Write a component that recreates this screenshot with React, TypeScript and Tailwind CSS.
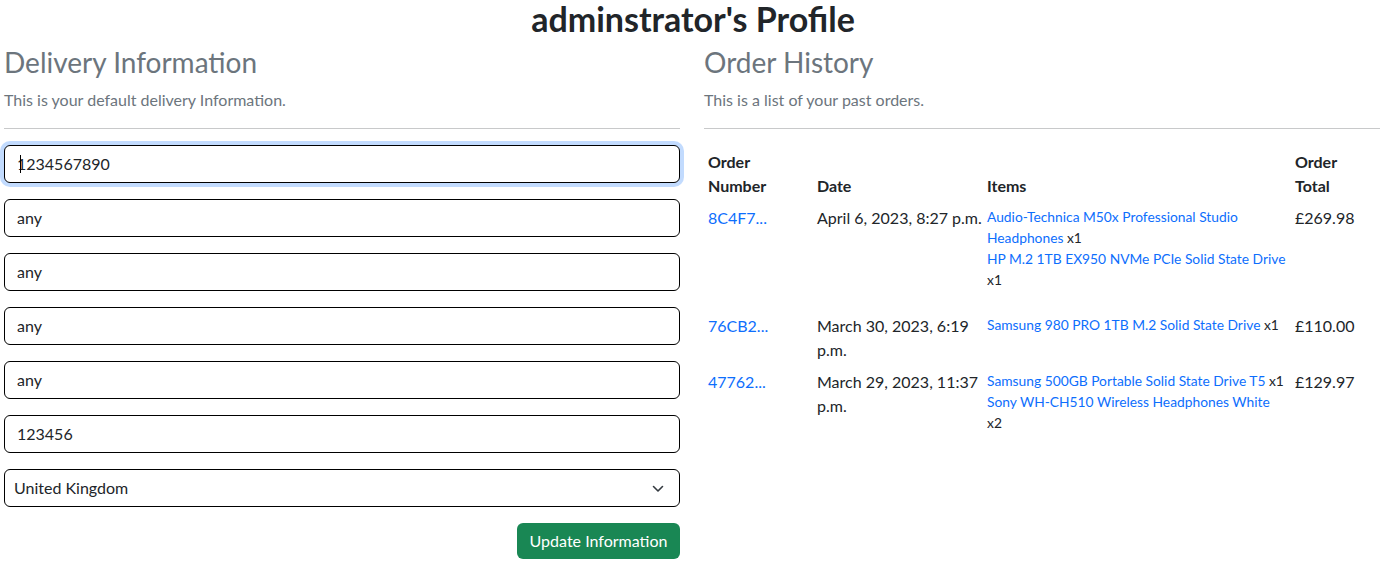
const font = { fontFamily: 'Lato, "Open Sans", sans-serif' };

// keep: hold the name and its quantity on one line; nowrap: don't break the name itself
type Item = { name: string; qty: number; nowrap?: boolean; keep?: boolean };
type Order = { number: string; date: string; items: Item[]; total: string };

const ORDERS: Order[] = [
  {
    number: '8C4F7...',
    date: 'April 6, 2023, 8:27 p.m.',
    items: [
      { name: 'Audio-Technica M50x Professional Studio Headphones', qty: 1 },
      { name: 'HP M.2 1TB EX950 NVMe PCIe Solid State Drive', qty: 1, nowrap: true },
    ],
    total: '£269.98',
  },
  {
    number: '76CB2...',
    date: 'March 30, 2023, 6:19 p.m.',
    items: [{ name: 'Samsung 980 PRO 1TB M.2 Solid State Drive', qty: 1, keep: true }],
    total: '£110.00',
  },
  {
    number: '47762...',
    date: 'March 29, 2023, 11:37 p.m.',
    items: [
      { name: 'Samsung 500GB Portable Solid State Drive T5', qty: 1, keep: true },
      { name: 'Sony WH-CH510 Wireless Headphones White', qty: 2, nowrap: true },
    ],
    total: '£129.97',
  },
];

const FIELDS = ['1234567890', 'any', 'any', 'any', 'any', '123456'];

function Field({ value, focused }: { value: string; focused?: boolean }) {
  return (
    <div className="relative">
      <input
        defaultValue={value}
        readOnly
        className={`block h-[38px] w-full rounded-[6px] border border-black bg-white px-3 text-base text-[#212529] outline-none ${
          focused ? 'shadow-[0_0_0_4px_rgba(13,110,253,0.25)]' : ''
        }`}
        style={font}
      />
      {focused && <span className="absolute left-[16px] top-[10px] h-[18px] w-px bg-black" />}
    </div>
  );
}

export default function App() {
  return (
    <div className="bg-white text-[#212529]" style={font}>
      <h2 className="mb-2 text-center text-[34px] font-bold leading-[38px]">adminstrator's Profile</h2>
      <div className="flex gap-6 pl-1 pr-[6px]">
        <section className="w-[676px] shrink-0">
          <h3 className="mb-2 text-[28px] leading-[1.2] text-[#6c757d]">Delivery Information</h3>
          <p className="mb-4 text-base leading-6 text-[#6c757d]">This is your default delivery Information.</p>
          <hr className="mb-4 border-t border-[#c8c9ca]" />
          <div className="flex flex-col gap-4">
            {FIELDS.map((v, i) => (
              <Field key={i} value={v} focused={i === 0} />
            ))}
            <div className="relative">
              <select
                defaultValue="GB"
                className="block h-[38px] w-full appearance-none rounded-[6px] border border-black bg-white px-[9px] text-base text-[#212529] outline-none"
                style={font}
              >
                <option value="GB">United Kingdom</option>
              </select>
              <svg
                className="pointer-events-none absolute right-[16px] top-[16px]"
                width="12"
                height="8"
                viewBox="0 0 12 8"
                fill="none"
                stroke="#343a40"
                strokeWidth="1.6"
                strokeLinecap="round"
                strokeLinejoin="round"
              >
                <path d="M1.5 1.5 6 6l4.5-4.5" />
              </svg>
            </div>
          </div>
          <div className="mt-4 flex justify-end">
            <button className="h-9 w-[163px] rounded-[6px] bg-[#198754] text-base text-white" style={font}>
              Update Information
            </button>
          </div>
        </section>

        <section className="w-[676px] shrink-0">
          <h3 className="mb-2 text-[28px] leading-[1.2] text-[#6c757d]">Order History</h3>
          <p className="mb-4 text-base leading-6 text-[#6c757d]">This is a list of your past orders.</p>
          <hr className="mb-[17px] border-t border-[#c8c9ca]" />
          <table className="w-full table-fixed border-collapse text-left text-base leading-6">
            <colgroup>
              <col className="w-[109px]" />
              <col className="w-[170px]" />
              <col className="w-[308px]" />
              <col className="w-[89px]" />
            </colgroup>
            <thead>
              <tr className="align-bottom">
                <th className="p-1 font-bold">Order Number</th>
                <th className="p-1 font-bold">Date</th>
                <th className="p-1 font-bold">Items</th>
                <th className="py-1 pl-1 pr-3 font-bold">Order Total</th>
              </tr>
            </thead>
            <tbody>
              {ORDERS.map((o) => (
                <tr key={o.number} className="align-top">
                  <td className="p-1">
                    <a className="text-[#0d6efd]">{o.number}</a>
                  </td>
                  <td className="py-1 pl-1 pr-0">{o.date}</td>
                  <td className="p-1">
                    <div className="mb-4 text-[13.8px] leading-[21px]">
                      {o.items.map((it, i) => (
                        <div key={i} className={it.keep ? 'whitespace-nowrap' : ''}>
                          <a className={`text-[#0d6efd] ${it.nowrap ? 'whitespace-nowrap' : ''}`}>{it.name}</a> x{it.qty}
                        </div>
                      ))}
                    </div>
                  </td>
                  <td className="p-1">{o.total}</td>
                </tr>
              ))}
            </tbody>
          </table>
        </section>
      </div>
    </div>
  );
}
